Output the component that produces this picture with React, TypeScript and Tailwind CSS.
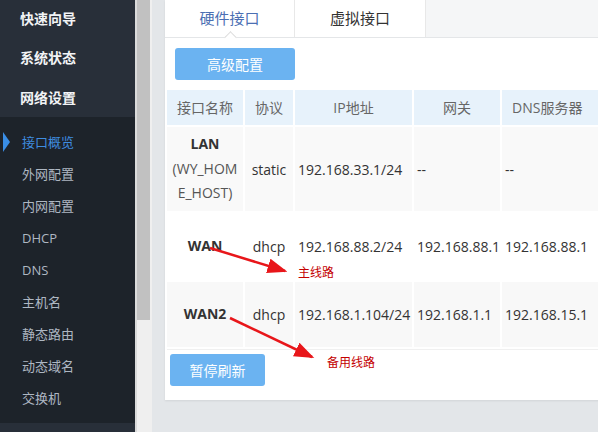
import React from "react";

const font = { fontFamily: '"Open Sans", "Noto Sans CJK SC", sans-serif' };

const topMenu = [
  { t: "快速向导", h: "h-[37px]" },
  { t: "系统状态", h: "h-[40px]" },
  { t: "网络设置", h: "h-[40px]" },
];
const subMenu = ["接口概览", "外网配置", "内网配置", "DHCP", "DNS", "主机名", "静态路由", "动态域名", "交换机"];

const SideBar = () => (
  <div className="w-[135px] h-[432px] bg-[#282f39] flex flex-col shrink-0">
    {topMenu.map((m) => (
      <div key={m.t} className={`${m.h} flex items-center pl-[20px] text-[14px] font-bold text-[#f2f4f6]`}>
        {m.t}
      </div>
    ))}
    <div className="bg-[#1d232a] h-[306px] pt-[10px] flex flex-col">
      {subMenu.map((m, i) => (
        <div
          key={m}
          className={`relative h-[32px] shrink-0 flex items-center pl-[22px] text-[13px] ${
            i === 0 ? "text-[#3f8de0]" : "text-[#aeb7c2]"
          }`}
        >
          {i === 0 && (
            <span className="absolute left-[3px] top-[5px] w-0 h-0 border-y-[10px] border-y-transparent border-l-[7px] border-l-[#3a8ee6]" />
          )}
          {m}
        </div>
      ))}
    </div>
  </div>
);

const ScrollBar = () => (
  <div className="w-[17px] h-[432px] bg-[#efefef] border-l-2 border-[#dadada] flex flex-col shrink-0">
    <div className="h-[320px] w-[13px] bg-[#c1c1c1]" />
  </div>
);

const Tabs = () => (
  <div className="h-[38px] flex border-b border-[#e4e6e8] shrink-0">
    <div className="relative w-[130px] bg-white flex items-center justify-center text-[15px] text-[#4b6fb3] border-r border-[#e8e8e8]">
      硬件接口
      <span className="absolute left-[61px] bottom-[-5px] w-[9px] h-[9px] rotate-45 bg-white border-l border-t border-[#dcdcdc]" />
    </div>
    <div className="w-[131px] bg-white flex items-center justify-center text-[15px] text-[#333] border-r border-[#e8e8e8]">
      虚拟接口
    </div>
    <div className="flex-1 bg-[#f5f6f7]" />
  </div>
);

type Row = { name: string; sub?: string; proto: string; ip: string; gw: string; dns: string; bg: string; h: string };

const rows: Row[] = [
  { name: "LAN", sub: "(WY_HOME_HOST)", proto: "static", ip: "192.168.33.1/24", gw: "--", dns: "--", bg: "bg-[#f9f9f9]", h: "h-[84px]" },
  { name: "WAN", proto: "dhcp", ip: "192.168.88.2/24", gw: "192.168.88.1", dns: "192.168.88.1", bg: "bg-white", h: "h-[67px]" },
  { name: "WAN2", proto: "dhcp", ip: "192.168.1.104/24", gw: "192.168.1.1", dns: "192.168.15.1", bg: "bg-[#f8f8f8]", h: "h-[65px]" },
];

const Table = () => (
  <table className="border-separate border-spacing-[2px] w-[459px] table-fixed text-[14px] text-[#333]">
    <colgroup>
      <col className="w-[76px]" />
      <col className="w-[48px]" />
      <col className="w-[117px]" />
      <col className="w-[86px]" />
      <col className="w-[120px]" />
    </colgroup>
    <thead>
      <tr className="h-[35px] bg-[#e7f2fb] text-[#666]">
        <th className="font-normal text-center">接口名称</th>
        <th className="font-normal text-center">协议</th>
        <th className="font-normal text-center">IP地址</th>
        <th className="font-normal text-center">网关</th>
        <th className="font-normal text-left pl-[10px]">DNS服务器</th>
      </tr>
    </thead>
    <tbody>
      {rows.map((r) => (
        <tr key={r.name} className={`${r.h} ${r.bg}`}>
          <td className="text-center leading-[24.5px] px-[4px] break-all">
            <div className="font-bold">{r.name}</div>
            {r.sub && <div className="text-[#555]">{r.sub}</div>}
          </td>
          <td className="text-center">{r.proto}</td>
          <td className="pl-[3px] whitespace-nowrap">{r.ip}</td>
          <td className="pl-[3px] whitespace-nowrap">{r.gw}</td>
          <td className="pl-[3px] whitespace-nowrap">{r.dns}</td>
        </tr>
      ))}
    </tbody>
  </table>
);

const Notes = () => (
  <>
    <svg className="absolute left-0 top-0 pointer-events-none" width="598" height="432">
      <defs>
        <marker id="ah" markerWidth="8" markerHeight="6" refX="7" refY="3" orient="auto" markerUnits="strokeWidth">
          <path d="M0,0 L8,3 L0,6 Z" fill="#e8161a" />
        </marker>
      </defs>
      <line x1="210" y1="248" x2="285" y2="271" stroke="#e8161a" strokeWidth="2.5" markerEnd="url(#ah)" />
      <line x1="230" y1="318" x2="312" y2="357" stroke="#e8161a" strokeWidth="2.5" markerEnd="url(#ah)" />
    </svg>
    <span className="absolute left-[298px] top-[264px] text-[12px] text-[#c40000]">主线路</span>
    <span className="absolute left-[327px] top-[354px] text-[12px] text-[#c40000]">备用线路</span>
  </>
);

export default function App() {
  return (
    <div className="relative w-[598px] h-[432px] overflow-hidden flex bg-[#e3e6e9]" style={font}>
      <SideBar />
      <ScrollBar />
      <div className="pl-[13px] flex-1 min-w-0">
        <div className="w-[460px] h-[400px] bg-white shadow-[0_1px_2px_rgba(0,0,0,0.08)] flex flex-col">
          <Tabs />
          <div className="px-[10px] pt-[10px]">
            <button className="w-[120px] h-[32px] rounded-[3px] bg-[#6bb3f1] text-white text-[14px]">高级配置</button>
          </div>
          <div className="mt-[8px]">
            <Table />
          </div>
          <div className="pl-[3px] pt-[4px] border-t border-[#f0f0f0] mx-[2px]">
            <button className="w-[95px] h-[32px] rounded-[3px] bg-[#6bb3f1] text-white text-[14px]">暂停刷新</button>
          </div>
        </div>
      </div>
      <Notes />
    </div>
  );
}
